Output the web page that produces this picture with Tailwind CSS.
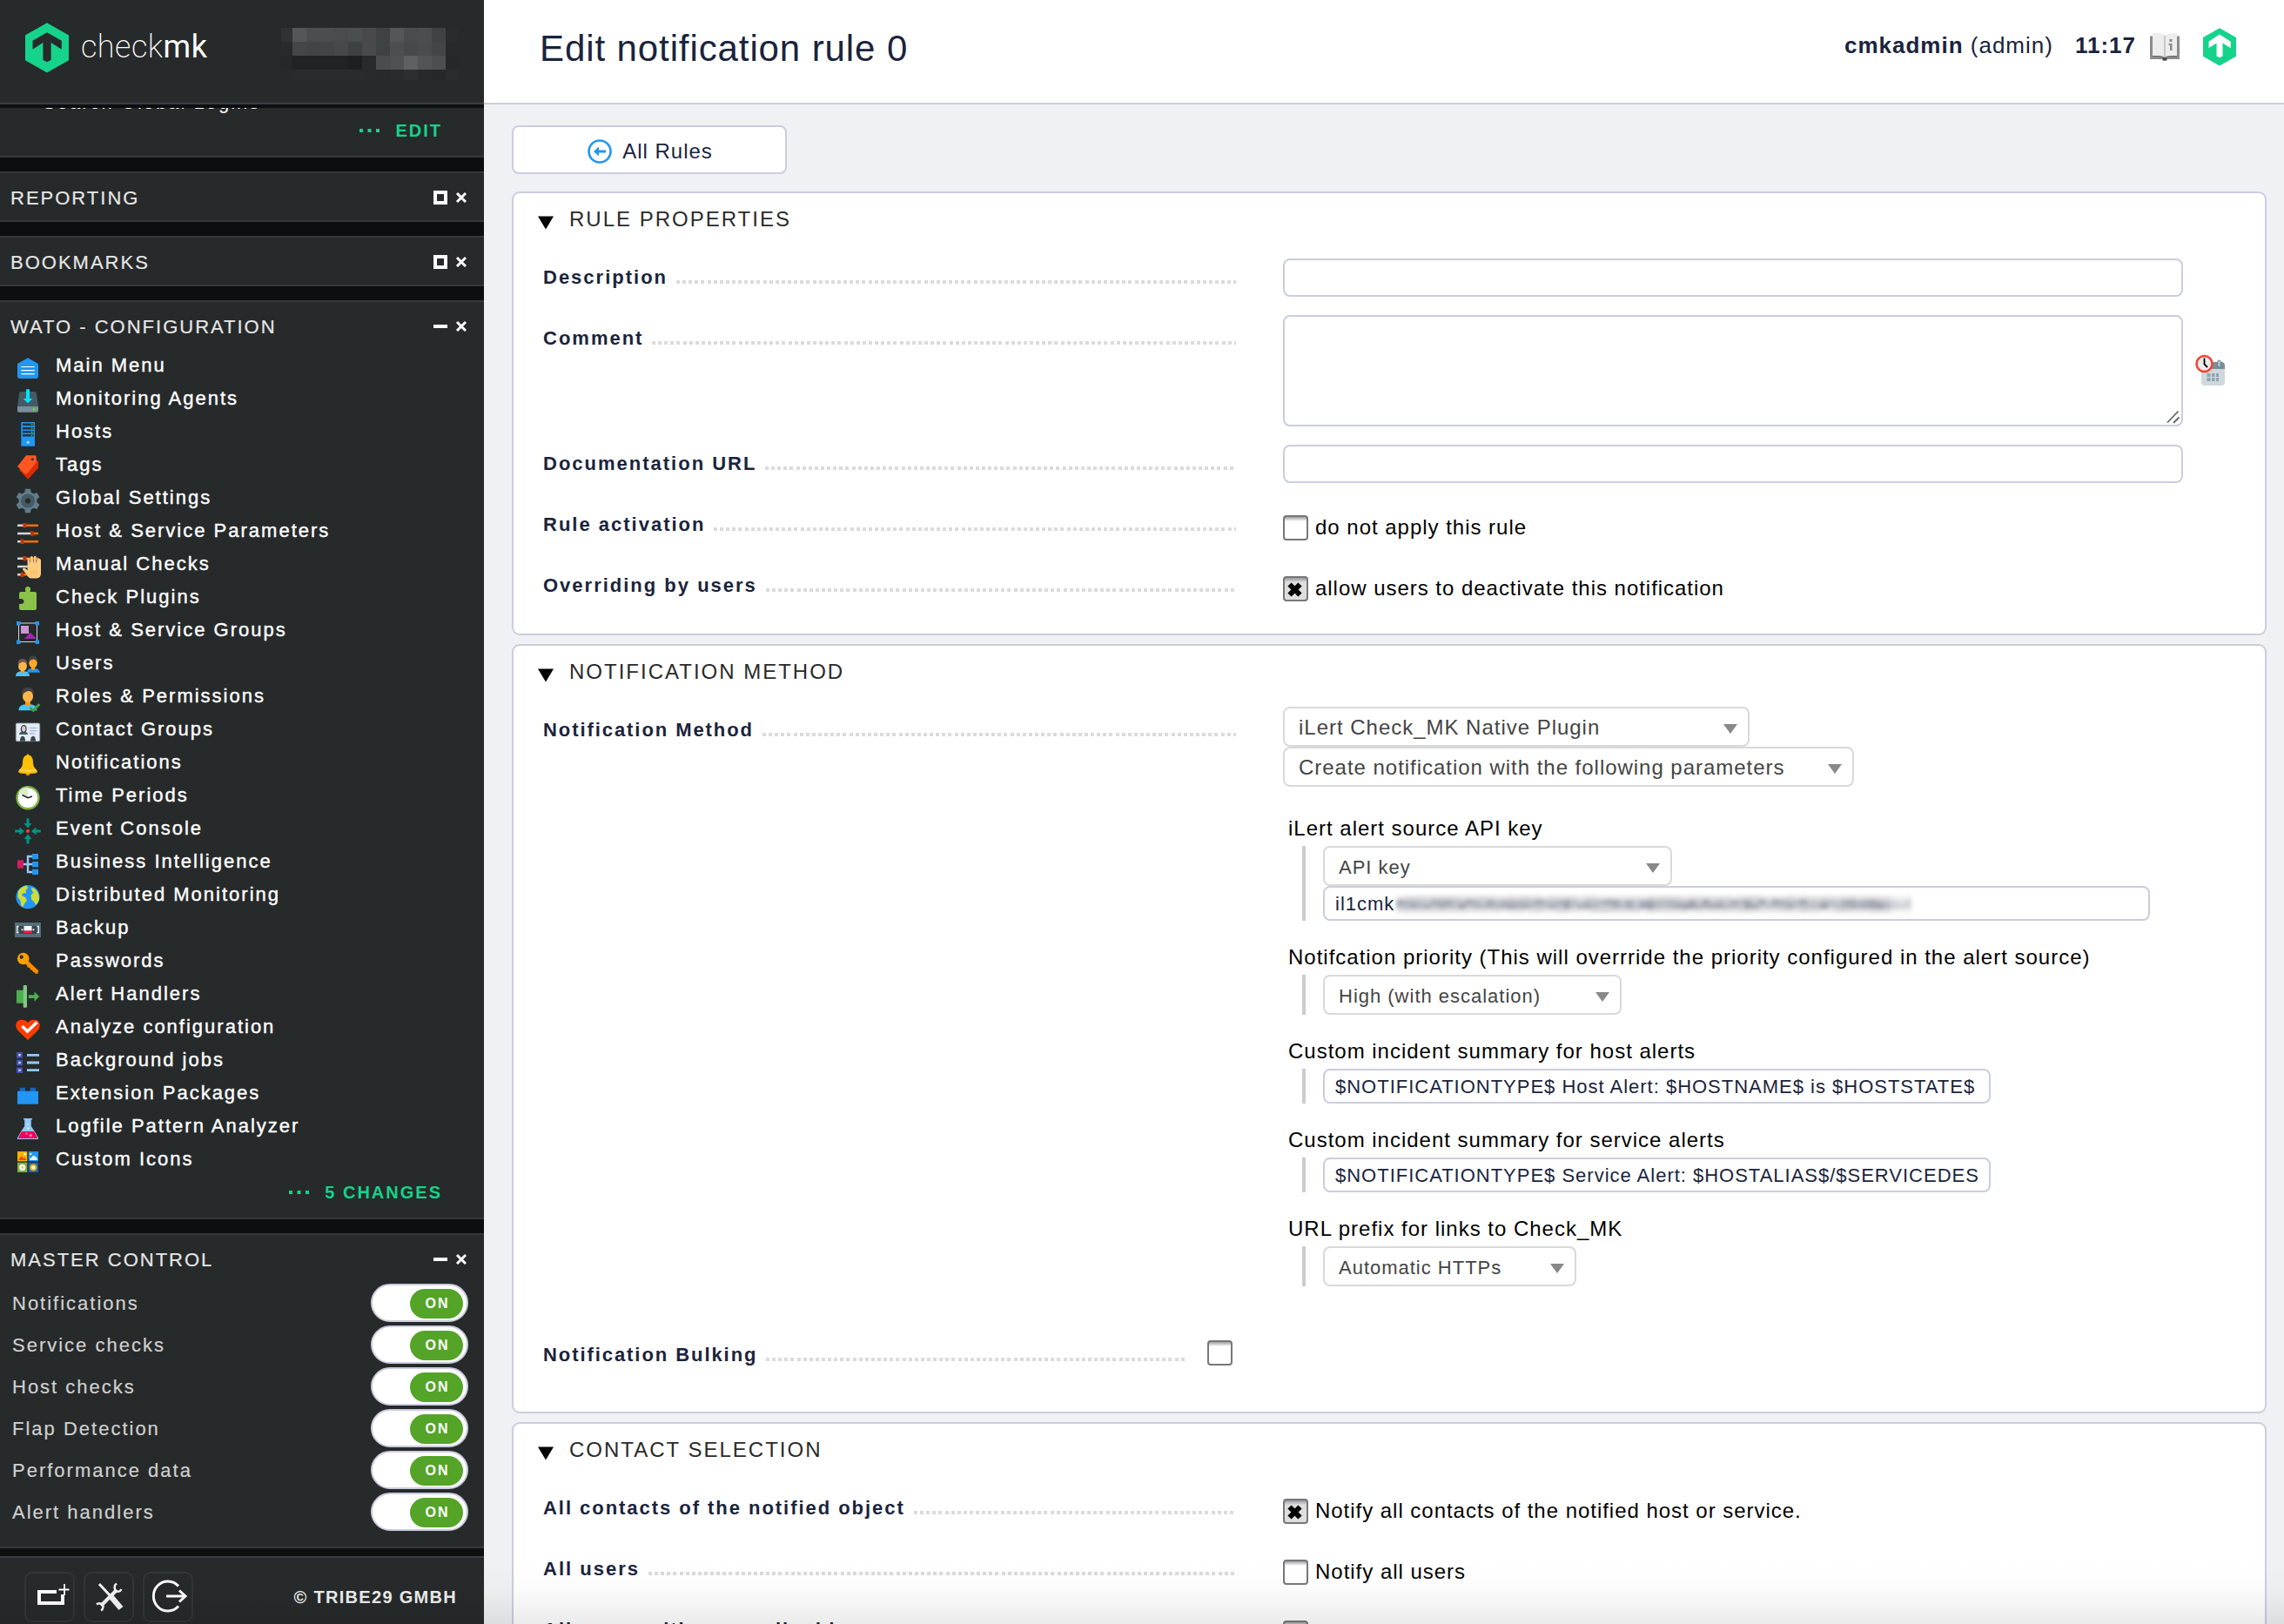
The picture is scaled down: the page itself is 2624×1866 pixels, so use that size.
<!DOCTYPE html>
<html lang="en">
<head>
<meta charset="utf-8">
<title>Edit notification rule 0</title>
<script src="https://cdn.jsdelivr.net/npm/@tailwindcss/browser@4"></script>
</head>
<body class="flex h-[1866px] w-[2624px] overflow-hidden bg-[#f0f1f4] font-['Liberation_Sans',Arial,sans-serif]">

<!-- Sidebar -->
<aside class="flex h-full w-[556px] shrink-0 flex-col overflow-hidden bg-[#0b0f10]">
  <div class="flex h-[120px] shrink-0 items-start border-b-2 border-[#3b3e48] bg-[#272a2b] pl-[29px]">
    <svg class="mt-[26px] h-[58px] w-[50px]" viewBox="29 26 50 58"><path fill="#15d38a" d="M54 26.3 79 40.5V69.3L54 83.5 29 69.3V40.5z"/><path fill="#272a2b" d="M54 37.3 70.8 46.7V56.7L58.6 49V69L54 71.3 49.4 69V49L37.5 56.7V46.7z"/></svg>
    <div class="ml-[14px] mt-[33px] w-[230px] whitespace-nowrap font-['Roboto',sans-serif] text-[36px] leading-[42px] font-light tracking-[0.500px] text-white"><span class="font-extralight">check</span><span class="font-normal">mk</span></div>
    <svg class="mt-[31px] h-[61px] w-[204px]" viewBox="0 0 204 61" shape-rendering="crispEdges" id="mosaic"></svg>
  </div>

  <div class="mt-[4px] flex min-h-0 flex-1 flex-col gap-[16px] overflow-hidden">
    <section class="shrink-0 border-b-2 border-[#34383a] bg-[#272a2b] pb-[13px]">
      <div class="mb-px -mt-[21px] pl-[49px] text-[22px] leading-[30px] tracking-[2px] text-white">Search Global Logins</div>
      <div class="flex h-8 items-center justify-end pr-[48px] text-[20px] leading-8 font-bold tracking-[2px] text-[#15d38a]">
        <svg class="mr-[17px] h-1 w-6" viewBox="0 0 24 4"><path fill="currentColor" d="M0 0h4v4H0zM9.500 0h4v4h-4zM19 0h4v4h-4z"/></svg>EDIT</div>
    </section>

    <section class="shrink-0 border-y-2 border-[#34383a] bg-[#272a2b]">
      <div class="flex h-[54px] items-center pl-3 pr-5"><h2 class="h-[51px] flex-1 text-[22px] leading-[54px] tracking-[2px] text-[#e6e6e6] [-webkit-text-stroke:0.2px_#e6e6e6]">REPORTING</h2>
        <svg class="mt-px h-[16px] w-[38px]" viewBox="0 0 38 16"><path fill="none" stroke="#fff" stroke-width="4" d="M2 2h12v12H2z"/><path stroke="#fff" stroke-width="3" d="m27 3 10 10M37 3 27 13"/></svg></div>
    </section>

    <section class="shrink-0 border-y-2 border-[#34383a] bg-[#272a2b]">
      <div class="flex h-[54px] items-center pl-3 pr-5"><h2 class="h-[51px] flex-1 text-[22px] leading-[54px] tracking-[2px] text-[#e6e6e6] [-webkit-text-stroke:0.2px_#e6e6e6]">BOOKMARKS</h2>
        <svg class="mt-px h-[16px] w-[38px]" viewBox="0 0 38 16"><path fill="none" stroke="#fff" stroke-width="4" d="M2 2h12v12H2z"/><path stroke="#fff" stroke-width="3" d="m27 3 10 10M37 3 27 13"/></svg></div>
    </section>

    <section class="shrink-0 border-y-2 border-[#34383a] bg-[#272a2b] pb-[13px]">
      <div class="flex h-[54px] items-center pl-3 pr-5"><h2 class="h-[51px] flex-1 text-[22px] leading-[54px] tracking-[2px] text-[#e6e6e6] [-webkit-text-stroke:0.2px_#e6e6e6]">WATO - CONFIGURATION</h2>
        <svg class="mt-px h-[16px] w-[38px]" viewBox="0 0 38 16"><path fill="#fff" d="M0 6h16v4H0z"/><path stroke="#fff" stroke-width="3" d="m27 3 10 10M37 3 27 13"/></svg></div>
      <ul class="mt-[3px]" id="nav"></ul>
      <div class="flex h-8 items-center justify-end pr-[48px] text-[20px] leading-8 font-bold tracking-[2px] text-[#15d38a]">
        <svg class="mr-[17px] h-1 w-6" viewBox="0 0 24 4"><path fill="currentColor" d="M0 0h4v4H0zM9.500 0h4v4h-4zM19 0h4v4h-4z"/></svg>5 CHANGES</div>
    </section>

    <section class="shrink-0 border-y-2 border-[#34383a] bg-[#272a2b] pb-4">
      <div class="flex h-[54px] items-center pl-3 pr-5"><h2 class="h-[51px] flex-1 text-[22px] leading-[54px] tracking-[2px] text-[#e6e6e6] [-webkit-text-stroke:0.2px_#e6e6e6]">MASTER CONTROL</h2>
        <svg class="mt-px h-[16px] w-[38px]" viewBox="0 0 38 16"><path fill="#fff" d="M0 6h16v4H0z"/><path stroke="#fff" stroke-width="3" d="m27 3 10 10M37 3 27 13"/></svg></div>
      <ul id="switches"></ul>
    </section>
  </div>

  <footer class="mt-[9px] flex h-[78px] shrink-0 items-start gap-[10px] border-t-2 border-[#3b3e48] bg-[#272a2b] pl-[28px] pt-[16px]">
    <div class="flex h-[58px] w-[58px] items-center justify-center rounded-[9px] border-2 border-[#323637]">
      <svg class="h-[54px] w-[54px]" viewBox="30 1808 54 54" fill="none" stroke="#fff"><path stroke-width="4" d="M65 1829H45v13h27v-10"/><path stroke-width="1.800" d="M74 1820v13M67.500 1826.500h12"/></svg></div>
    <div class="flex h-[58px] w-[58px] items-center justify-center rounded-[9px] border-2 border-[#323637]">
      <svg class="h-[54px] w-[54px]" viewBox="98 1808 54 54" fill="none" stroke="#f4f4f4"><path stroke-width="3" d="m114 1820 13 14"/><path stroke-width="6.500" d="m127 1834 12 14"/><path stroke-width="4" d="m116 1845 18-18"/><path stroke-width="2.500" d="M134 1819.500c-3 2-3 6-1 8s5 1.500 6.500-1.500M111 1843.500c3-3 8 0 7.500 3s-1 3-2.500 4"/></svg></div>
    <div class="flex h-[58px] w-[58px] items-center justify-center rounded-[9px] border-2 border-[#323637]">
      <svg class="h-[54px] w-[54px]" viewBox="167 1808 54 54" fill="none" stroke="#fff"><path stroke-width="3" d="M206 1822.500A16.500 17 0 1 0 206 1845.500"/><path stroke-width="3" d="M192 1834h21"/><path stroke-width="3" d="m207 1827.500 7 6.500-7 6.500"/></svg></div>
    <div class="flex-1 pr-[31px] pt-[14px] text-right text-[20px] leading-[30px] font-bold tracking-[1.300px] whitespace-nowrap text-[#ededed]">© TRIBE29 GMBH</div>
  </footer>
</aside>

<!-- Page -->
<main class="flex h-full min-w-0 flex-1 flex-col text-[#1a243d]">
  <header class="flex h-[120px] shrink-0 items-start border-b-2 border-[#cbcddf] bg-white pl-[64px] pr-[55px]">
    <h1 class="mt-[31px] flex-1 text-[42px] leading-[50px] tracking-[0.900px]">Edit notification rule 0</h1>
    <div class="mt-[32px] text-[26px] leading-[40px] tracking-[1px]"><b>cmkadmin</b> (admin)</div>
    <div class="ml-[25px] mt-[32px] text-[26px] leading-[40px] font-bold tracking-[1px]">11:17</div>
    <svg class="ml-[16px] mt-[37px] h-[34px] w-[34px]" viewBox="2470 40 34 34"><path fill="#8b8b8b" d="M2470 44.500h34V71h-15c0 2-4 2-4 0h-15z"/><path fill="#ededed" d="M2473 41c6 0 11 0 14 3 3-3 8-3 14-3v26c-6 0-11 0-14 2-3-2-8-2-14-2z"/><path stroke="#bbb" stroke-width="1.500" d="M2487 44v24"/><path stroke="#666" stroke-width="1" d="M2473 67.500c6 0 11 0 14 2 3-2 8-2 14-2" fill="none"/><path fill="#8a8a8a" d="M2492.500 48h3v3h-3zM2491.500 53h4v8h-2.500v-6h-1.500z"/><path fill="#444" d="M2484.500 69.500h5v3h-5z"/></svg>
    <svg class="ml-[27px] mt-[32px] h-[44px] w-[38px]" viewBox="29 26 50 58"><path fill="#15d38a" d="M54 26.300 79 40.500V69.300L54 83.500 29 69.300V40.500z"/><path fill="#fff" d="M54 36 70.800 46.700V56.700L58.600 49V69L54 71.300 49.400 69V49L37.500 56.700V46.700z"/></svg>
  </header>

  <div class="flex min-h-0 flex-1 flex-col items-start overflow-hidden pl-[32px] pr-[20px] pt-[24px]">
    <button class="flex h-[56px] w-[316px] shrink-0 items-center justify-center gap-[12px] rounded-[8px] border-2 border-[#cbcddf] bg-white pl-[2px] pt-[3px] text-[24px] leading-[52px] tracking-[1px]">
      <svg class="h-[28px] w-[28px]" viewBox="0 0 28 28"><circle cx="14" cy="14" r="12.500" fill="none" stroke="#2196f3" stroke-width="2.600"/><path fill="#2196f3" d="M7 14l6-5.500v4h8v3h-8v4z"/></svg><span>All Rules</span>
    </button>

    <!-- Rule properties -->
    <section class="mt-[20px] h-[510px] w-full shrink-0 rounded-[9px] border-2 border-[#cbcddf] bg-white pl-[34px]">
      <div class="-ml-[6px] flex h-[69px] items-start text-[24px] leading-[59px] tracking-[2px] text-[#2a2a2a]"><svg class="mt-[26px] mr-[18px] h-[16px] w-[18px]" viewBox="0 0 18 16"><path d="M0 0.500h18L9 15.500z"/></svg>RULE PROPERTIES</div>
      <div class="flex h-[70px]">
        <div class="flex w-[796px] text-[22px] leading-[55px] font-bold tracking-[2px]"><span class="mr-[10px] whitespace-nowrap">Description</span><i class="mt-[31px] h-[4px] flex-1 bg-[repeating-linear-gradient(90deg,#dbdbdb_0_4px,transparent_4px_7.115px)]"></i></div>
        <div class="ml-[54px] mt-[6px] h-[44px] w-[1034px] rounded-[8px] border-2 border-[#cbcddf]"></div>
      </div>
      <div class="flex h-[144px]">
        <div class="flex w-[796px] text-[22px] leading-[55px] font-bold tracking-[2px]"><span class="mr-[10px] whitespace-nowrap">Comment</span><i class="mt-[31px] h-[4px] flex-1 bg-[repeating-linear-gradient(90deg,#dbdbdb_0_4px,transparent_4px_7.115px)]"></i></div>
        <div class="ml-[54px] mt-px flex h-[128px] w-[1034px] items-end justify-end rounded-[8px] border-2 border-[#cbcddf]">
          <svg class="h-[18px] w-[18px]" viewBox="0 0 18 18"><path stroke="#666" stroke-width="1.800" d="M2 15.500 14.500 2.500M9 16l6.500-6.500"/></svg></div>
        <svg class="ml-[14px] mt-[46px] h-[36px] w-[34px]" viewBox="2522 407 34 36"><path fill="#cfd8dc" d="M2529 424h27v15q0 4-4 4h-19q-4 0-4-4z"/><path fill="#78909c" d="M2532 416h20q4 0 4 4v4h-24z"/><rect x="2547.500" y="414" width="4" height="8" rx="2" fill="#b0bec5" stroke="#546e7a" stroke-width=".7"/><path fill="#90a4ae" d="M2535.500 429h4v4h-4zM2541 429h3.500v4h-3.500zM2546 429h3v4h-3zM2535.500 434h4v4h-4zM2541 434h3.500v4h-3.500zM2546 434h3v4h-3z"/><circle cx="2532.500" cy="418" r="9" fill="#eee" stroke="#f44336" stroke-width="2.600"/><path stroke="#000" stroke-width="1.800" fill="none" d="M2532.500 411.500v7l3.500 3.500"/></svg>
      </div>
      <div class="flex h-[70px]">
        <div class="flex w-[796px] text-[22px] leading-[55px] font-bold tracking-[2px]"><span class="mr-[10px] whitespace-nowrap">Documentation URL</span><i class="mt-[31px] h-[4px] flex-1 bg-[repeating-linear-gradient(90deg,#dbdbdb_0_4px,transparent_4px_7.115px)]"></i></div>
        <div class="ml-[54px] mt-[6px] h-[44px] w-[1034px] rounded-[8px] border-2 border-[#cbcddf]"></div>
      </div>
      <div class="flex h-[70px]">
        <div class="flex w-[796px] text-[22px] leading-[55px] font-bold tracking-[2px]"><span class="mr-[10px] whitespace-nowrap">Rule activation</span><i class="mt-[31px] h-[4px] flex-1 bg-[repeating-linear-gradient(90deg,#dbdbdb_0_4px,transparent_4px_7.115px)]"></i></div>
        <div class="ml-[54px] mt-[17px] mr-[8px] h-[29px] w-[29px] rounded-[4px] border-2 border-[#77777b] bg-linear-to-b from-[#a0a0a0] via-white via-20% to-white"></div>
        <span class="text-[24px] leading-[61px] tracking-[0.980px] text-black">do not apply this rule</span>
      </div>
      <div class="flex h-[70px]">
        <div class="flex w-[796px] text-[22px] leading-[55px] font-bold tracking-[2px]"><span class="mr-[10px] whitespace-nowrap">Overriding by users</span><i class="mt-[31px] h-[4px] flex-1 bg-[repeating-linear-gradient(90deg,#dbdbdb_0_4px,transparent_4px_7.115px)]"></i></div>
        <div class="ml-[54px] mt-[17px] mr-[8px] flex h-[29px] w-[29px] rounded-[4px] border-2 border-[#77777b] bg-linear-to-b from-[#999] via-[#dedede] via-20% to-[#dedede]"><svg class="ml-[3px] mt-[5px] h-[17px] w-[17px]" viewBox="0 0 17 17"><path stroke="#000" stroke-width="6" d="m2.500 2.500 12 12M14.500 2.500l-12 12"/></svg></div>
        <span class="text-[24px] leading-[61px] tracking-[0.970px] text-black">allow users to deactivate this notification</span>
      </div>
    </section>

    <!-- Notification method -->
    <section class="mt-[10px] h-[884px] w-full shrink-0 rounded-[9px] border-2 border-[#cbcddf] bg-white pl-[34px]">
      <div class="-ml-[6px] flex h-[69px] items-start text-[24px] leading-[59px] tracking-[2px] text-[#2a2a2a]"><svg class="mt-[26px] mr-[18px] h-[16px] w-[18px]" viewBox="0 0 18 16"><path d="M0 0.500h18L9 15.500z"/></svg>NOTIFICATION METHOD</div>
      <div class="flex h-[718px]">
        <div class="flex w-[796px] text-[22px] leading-[55px] font-bold tracking-[1.930px]"><span class="mr-[10px] whitespace-nowrap">Notification Method</span><i class="mt-[31px] h-[4px] flex-1 bg-[repeating-linear-gradient(90deg,#dbdbdb_0_4px,transparent_4px_7.115px)]"></i></div>
        <div class="ml-[54px] mt-px flex flex-col items-start">
          <div class="flex h-[46px] w-[536px] items-center rounded-[8px] border-2 border-[#d9d9d9] pl-[16px] pr-[12px] text-[24px] tracking-[0.980px] text-[#444]"><span class="flex-1 pt-[2px] leading-[40px]">iLert Check_MK Native Plugin</span><svg class="mt-[4px] h-[11px] w-[16px]" viewBox="0 0 16 11"><path fill="#888" d="M0 0h16L8 11z"/></svg></div>
          <div class="flex h-[46px] w-[656px] items-center rounded-[8px] border-2 border-[#d9d9d9] pl-[16px] pr-[12px] text-[24px] tracking-[0.970px] text-[#444]"><span class="flex-1 pt-[2px] leading-[40px]">Create notification with the following parameters</span><svg class="mt-[4px] h-[11px] w-[16px]" viewBox="0 0 16 11"><path fill="#888" d="M0 0h16L8 11z"/></svg></div>

          <div class="ml-[6px] mt-[34px] flex flex-col gap-[28px] text-[24px] leading-[28px] tracking-[0.990px] text-black">
            <div><div>iLert alert source API key</div>
              <div class="ml-[16px] mt-[6px] border-l-4 border-[#ccc] pl-[20px]">
                <div class="flex h-[46px] w-[401px] items-center rounded-[8px] border-2 border-[#d9d9d9] pl-[16px] pr-[12px] text-[22px] text-[#444]"><span class="flex-1 pt-[3px] leading-[39px]">API key</span><svg class="mt-[4px] h-[11px] w-[16px]" viewBox="0 0 16 11"><path fill="#888" d="M0 0h16L8 11z"/></svg></div>
                <div class="flex h-[40px] w-[950px] items-center rounded-[8px] border-2 border-[#cbcddf] pl-[12px] pt-px text-[22px] leading-[35px] text-[#1a243d]">il1cmk<svg class="ml-[2px] h-[24px] w-[600px] blur-[2px]" viewBox="0 0 600 24" id="redacted"></svg></div>
              </div></div>
            <div><div>Notifcation priority (This will overrride the priority configured in the alert source)</div>
              <div class="ml-[16px] mt-[6px] border-l-4 border-[#ccc] pl-[20px]">
                <div class="flex h-[46px] w-[343px] items-center rounded-[8px] border-2 border-[#d9d9d9] pl-[16px] pr-[12px] text-[22px] text-[#444]"><span class="flex-1 pt-[3px] leading-[39px]">High (with escalation)</span><svg class="mt-[4px] h-[11px] w-[16px]" viewBox="0 0 16 11"><path fill="#888" d="M0 0h16L8 11z"/></svg></div>
              </div></div>
            <div><div>Custom incident summary for host alerts</div>
              <div class="ml-[16px] mt-[6px] border-l-4 border-[#ccc] pl-[20px]">
                <div class="h-[40px] w-[767px] overflow-hidden rounded-[8px] border-2 border-[#cbcddf] pl-[12px] text-[22px] leading-[37px] whitespace-nowrap text-[#1a243d]">$NOTIFICATIONTYPE$ Host Alert: $HOSTNAME$ is $HOSTSTATE$</div>
              </div></div>
            <div><div>Custom incident summary for service alerts</div>
              <div class="ml-[16px] mt-[6px] border-l-4 border-[#ccc] pl-[20px]">
                <div class="h-[40px] w-[767px] overflow-hidden rounded-[8px] border-2 border-[#cbcddf] pl-[12px] text-[22px] leading-[37px] whitespace-nowrap text-[#1a243d]">$NOTIFICATIONTYPE$ Service Alert: $HOSTALIAS$/$SERVICEDES</div>
              </div></div>
            <div><div>URL prefix for links to Check_MK</div>
              <div class="ml-[16px] mt-[6px] border-l-4 border-[#ccc] pl-[20px]">
                <div class="flex h-[46px] w-[291px] items-center rounded-[8px] border-2 border-[#d9d9d9] pl-[16px] pr-[12px] text-[22px] text-[#444]"><span class="flex-1 pt-[3px] leading-[39px]">Automatic HTTPs</span><svg class="mt-[4px] h-[11px] w-[16px]" viewBox="0 0 16 11"><path fill="#888" d="M0 0h16L8 11z"/></svg></div>
              </div></div>
          </div>
        </div>
      </div>
      <div class="flex h-[70px]">
        <div class="flex w-[738px] text-[22px] leading-[55px] font-bold tracking-[1.930px]"><span class="mr-[10px] whitespace-nowrap">Notification Bulking</span><i class="mt-[31px] h-[4px] flex-1 bg-[repeating-linear-gradient(90deg,#dbdbdb_0_4px,transparent_4px_7.115px)]"></i></div>
        <div class="ml-[25px] mt-[11px] h-[29px] w-[29px] rounded-[4px] border-2 border-[#77777b] bg-linear-to-b from-[#a0a0a0] via-white via-20% to-white"></div>
      </div>
    </section>

    <!-- Contact selection -->
    <section class="mt-[10px] h-[400px] w-full shrink-0 rounded-[9px] border-2 border-[#cbcddf] bg-white pl-[34px]">
      <div class="-ml-[6px] flex h-[69px] items-start text-[24px] leading-[59px] tracking-[2px] text-[#2a2a2a]"><svg class="mt-[26px] mr-[18px] h-[16px] w-[18px]" viewBox="0 0 18 16"><path d="M0 0.500h18L9 15.500z"/></svg>CONTACT SELECTION</div>
      <div class="flex h-[70px]">
        <div class="flex w-[796px] text-[22px] leading-[55px] font-bold tracking-[1.960px]"><span class="mr-[10px] whitespace-nowrap">All contacts of the notified object</span><i class="mt-[31px] h-[4px] flex-1 bg-[repeating-linear-gradient(90deg,#dbdbdb_0_4px,transparent_4px_7.115px)]"></i></div>
        <div class="ml-[54px] mt-[17px] mr-[8px] flex h-[29px] w-[29px] rounded-[4px] border-2 border-[#77777b] bg-linear-to-b from-[#999] via-[#dedede] via-20% to-[#dedede]"><svg class="ml-[3px] mt-[5px] h-[17px] w-[17px]" viewBox="0 0 17 17"><path stroke="#000" stroke-width="6" d="m2.500 2.500 12 12M14.500 2.500l-12 12"/></svg></div>
        <span class="text-[24px] leading-[61px] tracking-[0.970px] text-black">Notify all contacts of the notified host or service.</span>
      </div>
      <div class="flex h-[70px]">
        <div class="flex w-[796px] text-[22px] leading-[55px] font-bold tracking-[2px]"><span class="mr-[10px] whitespace-nowrap">All users</span><i class="mt-[31px] h-[4px] flex-1 bg-[repeating-linear-gradient(90deg,#dbdbdb_0_4px,transparent_4px_7.115px)]"></i></div>
        <div class="ml-[54px] mt-[17px] mr-[8px] h-[29px] w-[29px] rounded-[4px] border-2 border-[#77777b] bg-linear-to-b from-[#a0a0a0] via-white via-20% to-white"></div>
        <span class="text-[24px] leading-[61px] tracking-[0.980px] text-black">Notify all users</span>
      </div>
      <div class="flex h-[70px]">
        <div class="flex w-[796px] text-[22px] leading-[55px] font-bold tracking-[2px]"><span class="mr-[10px] whitespace-nowrap">All users with an email address</span></div>
        <div class="ml-[54px] mt-[17px] h-[29px] w-[29px] rounded-[4px] border-2 border-[#77777b] bg-linear-to-b from-[#a0a0a0] via-white via-20% to-white"></div>
      </div>
    </section>
  </div>
</main>

<!-- Shade along the bottom edge of the window -->
<div class="pointer-events-none absolute left-0 top-[1796px] h-[70px] w-[2624px] bg-linear-to-b from-black/0 via-black/2 via-50% to-black/8"></div>

<script>
const sliders = '<path stroke="#cfd8dc" stroke-width="2.6" d="M3 5.700h8M3 15h17M3 24.300h6"/><path stroke="#ff6f00" stroke-width="2.600" d="M11 5.700h16M20 15h7M9 24.300h18"/><path stroke="#bf360c" stroke-width="3.800" d="M11.300 3v5.400M20 12.300v5.400M8.500 21.600V27"/>';
const items = [
['Main Menu','<path fill="#2196f3" d="M15 3.300 27 10v14q0 3-3 3H6q-3 0-3-3V10z"/><path stroke="#fff" stroke-width="1.200" d="M7.300 13.500h15.400M7.300 17.600h15.400M7.300 21.700h15.400"/>'],
['Monitoring Agents','<path fill="#455a64" d="M7.500 4h15q2 0 2.500 2l2 15H3L5 6q.5-2 2.500-2z"/><path fill="#78909c" d="M3 21h24v5q0 1.700-2 1.700H5q-2 0-2-1.700z"/><circle cx="22.300" cy="24.300" r="1.500" fill="#64dd17"/><path fill="#00e5ff" d="M13 1.300h4V12h3.500L15 17.300 9.500 12H13z"/>'],
['Hosts','<path fill="#2196f3" d="M7.300 1H23v27.700H7.300z"/><path fill="#263238" d="M9 2.400h12.700v2.600H9zM9 6.800h12.700v2.600H9zM9 11h12.700v2.600H9zM9 15h12.700v2.600H9z"/><path fill="#64dd17" d="M19 3h1.300v1.300H19zM19 7.500h1.300v1.300H19zM19 11.600h1.300v1.300H19zM19 15.700h1.300V17H19z"/><circle cx="15.200" cy="24.300" r="1.500" fill="#bbdefb"/>'],
['Tags','<path fill="#dd2c00" d="M24 6l3 2v7.500L15.300 28.700 5 18z"/><path fill="#ff5722" d="M13 1.300h10q1.700 0 1.700 1.700v6L14.500 22q-1.500 1.500-3 0L3 14z"/><circle cx="20.300" cy="5.700" r="1.500" fill="#263238"/>'],
['Global Settings','<g fill="#607d8b"><circle cx="15" cy="15.500" r="10.500"/><path d="M12 1.800h6l.8 5H11.200zM12 29.200h6l.8-5H11.200z"/><path transform="rotate(60 15 15.500)" d="M12 1.800h6l.8 5H11.200zM12 29.200h6l.8-5H11.200z"/><path transform="rotate(120 15 15.500)" d="M12 1.800h6l.8 5H11.200zM12 29.200h6l.8-5H11.200z"/></g><circle cx="15" cy="15.500" r="5.500" fill="#272a2b" stroke="#455a64" stroke-width="5"/>'],
['Host &amp; Service Parameters', sliders],
['Manual Checks', sliders+'<path fill="#ffcc80" d="M14.500 5.500q1.500-1 2.500.5l.5 6 .5-8q1.400-1.800 2.800 0l.4 8 .8-8.500q1.400-1.500 2.600 0v8.500l1-6q1.400-1.500 2.800 0 1.600 0 1.600 2V23q0 5-5 5.500h-6q-3 0-4.500-3L8.700 18q1.300-2 4-.5l2 2z"/><path stroke="#ffb74d" stroke-width="1.200" d="M18.500 19v5M21.500 19v5M24.500 19v5"/>'],
['Check Plugins','<path fill="#8bc34a" fill-rule="evenodd" d="M7 6h5.500Q10.500 0 15 0t2.500 6H23q2 0 2 2v17q0 2-2 2H7q-2 0-2-2v-5q5.500.500 5.500-3T5 14V8q0-2 2-2z"/>'],
['Host &amp; Service Groups','<path fill="none" stroke="#cfd8dc" d="M4.500 4h21v21.500h-21z"/><path fill="#2196f3" d="M2 2h4.400v4.400H2zM23.600 2H28v4.400h-4.400zM2 23.500h4.400v4.400H2zM23.600 23.500H28v4.400h-4.400z"/><path fill="#ce93d8" d="M7 7h9v9H7z"/><path fill="#9c27b0" d="m11 22 6.700-7.500L25 22z"/>'],
['Users','<path fill="#2196f3" d="M14 22.700q0-5 7-5t8 5z"/><path fill="#ff9800" d="M19 15h4v4q-2 2-4 0z"/><ellipse cx="21" cy="12" rx="4.700" ry="5.500" fill="#ffa726"/><path fill="#424242" d="M16 11q-1-7.500 5-7.500t5 7.500q-1-3-4-3.500-4 0-6 3.500z"/><path fill="#4fc3f7" d="M1 27q0-6 8-6t8 6z"/><path fill="#ff9800" d="M7 18h4v4q-2 2-4 0z"/><ellipse cx="9" cy="15.500" rx="4.900" ry="5.500" fill="#ffb74d"/><path fill="#795548" d="M3.700 14Q3 7 9 7t5.300 7q-1-3-4-3.500-4 0-6.600 3.500z"/>'],
['Roles &amp; Permissions','<path fill="#4fc3f7" d="M4.300 28.300q0-7.300 10.700-7.300t10.500 7.300z"/><path fill="#ff9800" d="M12 16h6v6q-3 2.500-6 0z"/><ellipse cx="15" cy="12" rx="6" ry="7" fill="#ffb74d"/><path fill="#424242" d="M8.300 11Q7 1.700 15 1.700T21.700 11q-1-4.500-5-5-5 0-8.400 5z"/><path fill="none" stroke="#43a047" stroke-width="2.800" d="m17.300 25 4 3.500 7-7.500"/>'],
['Contact Groups','<rect x="1.300" y="5" width="27.400" height="20.700" rx="1.500" fill="#e6eaf3" stroke="#90a4ae" stroke-width=".8"/><path fill="#455a64" d="M5 18q0-3.500 5-3.500t5 3.500z"/><ellipse cx="10.200" cy="11.500" rx="2.800" ry="3.800" fill="#d7ccc8" stroke="#37474f" stroke-width="1.300"/><path stroke="#90b4e0" stroke-width="1.100" d="M17 10.500h8.500M17 13.700h8.500M17 16.900h5.500"/><path fill="#37474f" d="M6 25.700q0-6 3-6t3 6zM18 25.700q0-6 3-6t3 6z"/>'],
['Notifications','<path fill="#e68a00" d="M12.500 24h5q0 3.300-2.500 3.300T12.500 24zM14 2.300h2V5h-2z"/><path fill="#ffc107" d="M15 3.500q6 0 6 9 0 4 2 6t3 4q.500 2.500-11 2.500T4 22.500q1-2 3-4t2-6q0-9 6-9z"/><path fill="none" stroke="#ffe082" d="M5.500 20.500Q15 23.500 24.500 20.500"/>'],
['Time Periods','<circle cx="15" cy="14.700" r="12.500" fill="#fff" stroke="#7cb342" stroke-width="2.400"/><path fill="#dcedc8" d="M15 14.700V2.300A12.400 12.400 0 0 0 4.300 8.500z"/><path fill="none" stroke="#222" stroke-width="1.500" d="m8.500 11.500 6.500 3.200 5-1.700"/>'],
['Event Console','<path fill="#009688" d="M13.500.5h3V6h3L15 11.500 10.500 6h3zM13.500 29.500h3V24h3L15 18.500 10.500 24h3zM.200 13.500v3H5.500v3L11 15 5.500 10.500v3zM29.800 13.500v3H24.500v3L19 15l5.500-4.500v3z"/><circle cx="15" cy="15" r="2.100" fill="#f44336"/>'],
['Business Intelligence','<path fill="none" stroke="#90caf9" stroke-width="2.400" d="M9 15h12M21 6h-6v18h6"/><path fill="#d81b60" d="M3 10.300h7v9.400H3z"/><path fill="#2196f3" d="M20 3h7v6.300h-7zM20 12h7v6.300h-7zM20 20.700h7V27h-7z"/>'],
['Distributed Monitoring','<circle cx="15" cy="14.700" r="13.600" fill="#2196f3"/><path fill="#cddc39" d="M4 8q4-6 10-6.500l1 3-2.500 2.500.5 3-4 .500-1 2.500 4 2 2 3.500-3 4-1.500 3.500-2-1-1-6-3-4.500zM19 3.500l4.500 2q5 5 4.500 12-1 4-4 6.500l-2-4-3-2.500-.500-5 3-3-2-2z"/>'],
['Backup','<path fill="#546e7a" d="M0 6h30v17H0z"/><path fill="#37474f" d="M4.500 10h21v9h-21z"/><path fill="#fff" d="M10.500 10h9v5.500h-9z"/><path fill="#ff1744" d="M10.500 15.500h9V18h-9z"/><path fill="none" stroke="#eceff1" stroke-width="1.300" d="M4.500 10.500H2.700v7h1.800M25.500 10.500h1.800v7h-1.800"/><circle cx="8.500" cy="14.300" r="1" fill="#fff"/><circle cx="21.500" cy="14.300" r="1" fill="#fff"/>'],
['Passwords','<path stroke="#fb8c00" stroke-width="4.600" d="m12 12 14 13.500"/><path fill="#fb8c00" d="m14 14 .5 5.500 3 .3.500 2.700h2.500l.5 2.500h3l1.500 1.500h2z"/><circle cx="9.700" cy="9.500" r="6.800" fill="#ffa000"/><circle cx="7.700" cy="7.700" r="2.100" fill="#272a2b"/>'],
['Alert Handlers','<path fill="#4caf50" d="M2 7.700h8v15H2z"/><rect x="9.700" y="2" width="4.300" height="25.700" rx="1" fill="#81c784"/><path fill="#4caf50" d="M15.700 13.200h6.800V9.500L28.200 15l-5.700 5.700V17h-6.800z"/>'],
['Analyze configuration','<path fill="#ff3d00" d="M15 26.900 4 16.500Q1.300 14 1.300 10.500q0-6.800 6.500-6.800Q12.500 3.700 15 7q2.500-3.300 7.200-3.300 6.500 0 6.500 6.800 0 3.500-2.700 6z"/><path fill="none" stroke="#fff" stroke-width="3.400" d="m8.500 11 6 6 11-10.500"/>'],
['Background jobs','<path fill="#3f51b5" d="M2 3h7v6.700H2zM2 11.800h7v6.400H2zM2 20.500h7V27H2z"/><path fill="#c5cae9" d="M4.200 5h2.600v2.600H4.200zM4.200 13.700h2.600v2.600H4.200zM4.200 22.400h2.600V25H4.200z"/><path stroke="#90caf9" stroke-width="2.800" d="M14 6.300h14M14 15h14M14 23.700h14"/>'],
['Extension Packages','<path fill="#1565c0" d="M5.700 5.700H12V10H5.700zM17.700 5.700H24V10h-6.300z"/><path fill="#2196f3" d="M3 9.700h24v15H3z"/>'],
['Logfile Pattern Analyzer','<path fill="#90caf9" d="M10 3h10v1.600h-1.200V12l4 6H7.200l4-6V4.600H10z"/><path fill="#90caf9" d="m7.200 18-4 7q-1 2 1 2h21.600q2 0 1-2l-4-7z"/><path fill="#f50057" d="M8 18h14l4 7.200q.300.800-.700.800H4.700q-1 0-.700-.800z"/><circle cx="13.500" cy="20.500" r="1.200" fill="#ff80ab"/><circle cx="18.300" cy="22.500" r="1.700" fill="#ff80ab"/><circle cx="15" cy="10" r=".8" fill="#fff"/><circle cx="15.500" cy="14.500" r="1" fill="#fff"/>'],
['Custom Icons','<path fill="#ffb300" d="M3 3h11.300v11.300H3z"/><path fill="#2196f3" d="M15.700 3H27v11.300H15.700z"/><path fill="#7cb342" d="M3 15.700h11.300V27H3z"/><path fill="#1565c0" d="M15.700 15.700H27V27H15.700z"/><path fill="#e65100" d="m4 13 3.500-5L10 11l1.500-1 2 3z"/><circle cx="11.700" cy="6" r="1.300" fill="#fff"/><path fill="#e3f2fd" d="M17.500 13q-1-3 2-3 1-3.500 3.500-1.500 3 1.500 3 4.500z"/><circle cx="18.200" cy="6" r="1.300" fill="#ffee58"/><circle cx="8.700" cy="21.400" r="3.600" fill="#fff"/><circle cx="8.700" cy="21.400" r="1.400" fill="#fbc02d"/><circle cx="21.300" cy="21.400" r="4" fill="#ffb300"/><circle cx="21.300" cy="21.400" r="2" fill="#fff"/>']
];
document.getElementById('nav').innerHTML = items.map(([label, art]) =>
  `<li class="flex h-[38px] items-start pl-[17px] text-[22px] leading-[31px] tracking-[2px] text-white"><svg class="mt-[4px] mr-[17px] h-[30px] w-[30px]" viewBox="0 0 30 30">${art}</svg><span class="[-webkit-text-stroke:0.4px_white]">${label}</span></li>`).join('');

document.getElementById('switches').innerHTML = ['Notifications','Service checks','Host checks','Flap Detection','Performance data','Alert handlers'].map(label =>
  `<li class="flex h-[48px] items-center pl-[14px] pr-[18px] text-[22px] leading-[48px] tracking-[2px] text-[#d0d0d0]"><span class="flex-1 pt-px [-webkit-text-stroke:0.2px_#d0d0d0]">${label}</span><span class="flex h-[44px] w-[112px] items-center justify-end rounded-full border-2 border-[#cbcddf] bg-white pr-[4px]"><span class="mt-px h-[34px] w-[61px] rounded-[17px] bg-[#54a428] pl-[2px] text-center text-[16px] leading-[34px] font-bold tracking-[2px] text-white">ON</span></span></li>`).join('');

// Pixelated site name in the sidebar header
const rows = [
 ['2f3333','545758','4b4e4f','4b4e4f','494c4d','4b4e4f','47494a','3e4242','545758','494c4d','4b4e4f','3f4243','282c2c'],
 ['282b2c','444748','424546','434647','464949','3d4142','484b4c','3f4243','4c4f50','464949','4a4d4e','434647','272a2b'],
 ['242829','1f2324','1f2324','1f2324','1f2324','1c2021','282b2c','4a4d4e','4e5152','5e6162','525556','4c4f50','242829'],
 ['272a2b','292c2d','292c2d','292c2d','292c2d','292c2d','282b2c','262a2b','292c2d','2c2f30','272a2b','252829','2a2d2e']];
document.getElementById('mosaic').innerHTML = rows.map((r, y) => r.map((c, x) =>
  `<rect x="${x ? x * 16 - 3 : 0}" y="${1 + y * 16}" width="${x ? (x === 12 ? 14 : 16) : 13}" height="${y === 3 ? 12 : 16}" fill="#${c}"/>`).join('')).join('');

// Masked part of the API key
let seed = 7, cells = '';
const rnd = () => (seed = (seed * 16807) % 2147483647) / 2147483647;
for (let x = 0; x < 74; x++) {
  const fade = x > 70 ? 0.5 : 1;
  [0.16, 0.4, 0.42, 0.16].forEach((a, y) => {
    cells += `<rect x="${x * 8}" y="${[2, 7, 12, 17][y]}" width="8" height="5" fill="#3c4258" fill-opacity="${(a * fade * (0.7 + rnd() * 0.5)).toFixed(2)}"/>`;
  });
}
document.getElementById('redacted').innerHTML = cells;
</script>
</body>
</html>
